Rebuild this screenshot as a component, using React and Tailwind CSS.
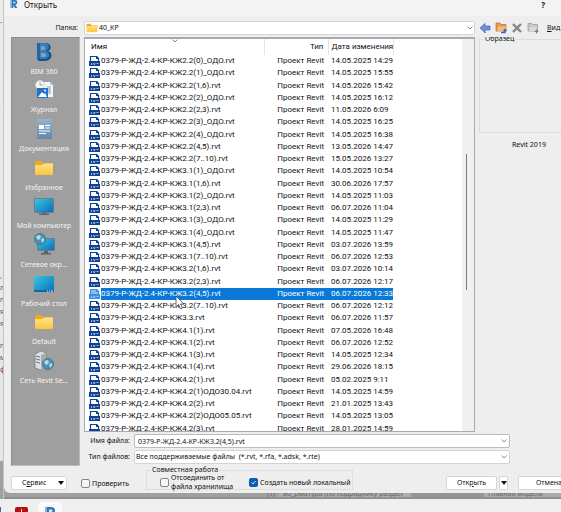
import { useState } from "react";

const files = [
  ["КЖ2.2(0)_ОДО", "14.05.2025 14:29"],
  ["КЖ2.2(1)_ОДО", "14.05.2025 15:55"],
  ["КЖ2.2(1,6)", "14.05.2026 15:42"],
  ["КЖ2.2(2)_ОДО", "14.05.2025 16:12"],
  ["КЖ2.2(2,3)", "11.05.2026 6:09"],
  ["КЖ2.2(3)_ОДО", "14.05.2025 16:25"],
  ["КЖ2.2(4)_ОДО", "14.05.2025 16:38"],
  ["КЖ2.2(4,5)", "13.05.2026 14:47"],
  ["КЖ2.2(7..10)", "15.05.2026 13:27"],
  ["КЖ3.1(1)_ОДО", "14.05.2025 10:54"],
  ["КЖ3.1(1,6)", "30.06.2026 17:57"],
  ["КЖ3.1(2)_ОДО", "14.05.2025 11:03"],
  ["КЖ3.1(2,3)", "06.07.2026 11:04"],
  ["КЖ3.1(3)_ОДО", "14.05.2025 11:29"],
  ["КЖ3.1(4)_ОДО", "14.05.2025 11:47"],
  ["КЖ3.1(4,5)", "03.07.2026 13:59"],
  ["КЖ3.1(7..10)", "06.07.2026 12:53"],
  ["КЖ3.2(1,6)", "03.07.2026 10:14"],
  ["КЖ3.2(2,3)", "06.07.2026 12:17"],
  ["КЖ3.2(4,5)", "06.07.2026 12:33"],
  ["КЖ3.2(7..10)", "06.07.2026 12:12"],
  ["КЖ3.3", "06.07.2026 11:57"],
  ["КЖ4.1(1)", "07.05.2026 16:48"],
  ["КЖ4.1(2)", "06.07.2026 12:52"],
  ["КЖ4.1(3)", "14.05.2025 12:34"],
  ["КЖ4.1(4)", "29.06.2026 18:15"],
  ["КЖ4.2(1)", "05.02.2025 9:11"],
  ["КЖ4.2(1)ОДО30.04", "14.05.2025 14:59"],
  ["КЖ4.2(2)", "21.01.2025 13:43"],
  ["КЖ4.2(2)ОДО05.05", "14.05.2025 13:05"],
  ["КЖ4.2(3)", "28.01.2025 14:59"],
];

const places = [
  ["BIM 360", BimIcon],
  ["Журнал", HistoryIcon],
  ["Документация", DocumentsIcon],
  ["Избранное", FolderIcon],
  ["Мой компьютер", ComputerIcon],
  ["Сетевое окр...", NetworkIcon],
  ["Рабочий стол", DesktopIcon],
  ["Default", FolderIcon],
  ["Сеть Revit Se...", ServerIcon],
];

function BimIcon() {
  return (
    <svg viewBox="0 0 20 20" className="size-5">
      <path d="M3 1h8c7 0 7 7 3 8 5 1 5 10-3 10H5l-2-2z" fill="#174f86" />
      <path d="M3 1h7c6 0 6 6 2 8 5 2 4 8-2 8H3z" fill="#2f7fc4" />
      <path d="M7 4h2c3 0 3 4 0 4H7zM7 11h3c3 0 3 4 0 4H7z" fill="#9c9c9c" />
      <path d="M3 1h3v16H3z" fill="#1f66a6" />
    </svg>
  );
}

function HistoryIcon() {
  return (
    <svg viewBox="0 0 20 20" className="size-5">
      <path d="M9 2h7l3 3v12H9z" fill="#f4f6f8" />
      <path d="M16 2v3h3z" fill="#b9c3cc" />
      <path d="M13 7h4M13 9h4M13 11h4M13 13h4" stroke="#7f9fbc" />
      <circle cx="6" cy="5" r="4.5" fill="#f6f4ef" stroke="#c9c9c4" strokeWidth=".6" />
      <path d="M6 2v3h3" stroke="#888" strokeWidth=".7" fill="none" />
      <path d="M3 8h11v10H3z" fill="#2074c8" />
      <path d="M4 17l4-5 2 2 1-1 2 4z" fill="#fff" />
      <circle cx="11" cy="10.500" r="1" fill="#fff" />
    </svg>
  );
}

function DocumentsIcon() {
  return (
    <svg viewBox="0 0 20 20" className="size-5">
      <defs>
        <linearGradient id="docs" x2="0" y2="1">
          <stop stopColor="#94b3cf" />
          <stop offset="1" stopColor="#6488ab" />
        </linearGradient>
      </defs>
      <path d="M3 0h15v20H3z" fill="url(#docs)" />
      <path d="M5 6h5v4H5z" fill="#fff" />
      <path d="M11 6.500h5M11 9h5M5 12h11M5 14.500h7" stroke="#fff" strokeWidth="1.200" />
    </svg>
  );
}

function FolderIcon({ className = "size-5" }) {
  return (
    <svg viewBox="0 0 20 20" className={className}>
      <defs>
        <linearGradient id="folder" x2="0" y2="1">
          <stop stopColor="#ffe08a" />
          <stop offset="1" stopColor="#fcc63c" />
        </linearGradient>
      </defs>
      <path d="M1 4q0-1 1-1h5l2 2h9q1 0 1 1v4H1z" fill="#f0a81c" />
      <path d="M1 7h7l2-1.500h9V16q0 1-1 1H2q-1 0-1-1z" fill="url(#folder)" />
    </svg>
  );
}

function ScreenGradient() {
  return (
    <defs>
      <linearGradient id="screen" x2="1" y2="1">
        <stop stopColor="#35c9dc" />
        <stop offset="1" stopColor="#0b6dc0" />
      </linearGradient>
    </defs>
  );
}

function ComputerIcon() {
  return (
    <svg viewBox="0 0 20 20" className="size-5">
      <ScreenGradient />
      <path d="M8 15h4v3H8z" fill="#777f86" />
      <path d="M5 17.500h10v1.500H5z" fill="#59636c" />
      <path d="M.5 2.500h19v14H.5z" fill="#48545e" />
      <path d="M1 3h18v13H1z" fill="url(#screen)" />
    </svg>
  );
}

function Globe({ cx, cy }) {
  return (
    <g>
      <circle cx={cx} cy={cy} r="5.500" fill="#4a8fb5" />
      <path d={`M${cx - 4} ${cy - 3}l4-1 1 2-2 3-2-1zM${cx + 1} ${cy}l3-1 0 3-2 2z`} fill="#b4dcd4" />
      <circle cx={cx} cy={cy} r="5.500" fill="none" stroke="#316c94" strokeWidth=".7" />
    </g>
  );
}

function NetworkIcon() {
  return (
    <svg viewBox="0 0 22 22" className="size-[22px]">
      <path d="M11 18h4v2h-4zM8 20h10v1.500H8z" fill="#59636c" />
      <path d="M4.500 5.500h17v12h-17z" fill="#48545e" />
      <path d="M5 6h16v11H5z" fill="url(#screen)" />
      <Globe cx={7} cy={6} />
    </svg>
  );
}

function DesktopIcon() {
  return (
    <svg viewBox="0 0 22 20" className="h-5 w-[22px]">
      <path d="M1 2h20v16H1z" fill="url(#screen)" />
      <path d="M1 16h20v2H1z" fill="#1766a0" />
      <path d="M14 17h1M16 17h1M18 17h2" stroke="#e9f6ff" />
    </svg>
  );
}

function ServerIcon() {
  return (
    <svg viewBox="0 0 20 20" className="size-5">
      <path d="M1 3l6-3 5 2v14l-5 3-6-2z" fill="#dcdfe1" stroke="#6f7478" strokeWidth=".7" />
      <path d="M7 4l5-2v14l-5 3z" fill="#a6abaf" />
      <path d="M2 5l4 1M2 8l4 1M2 11l4 1" stroke="#6f7478" />
      <Globe cx={14} cy={13} />
    </svg>
  );
}

function RvtIcon({ selected }) {
  const blue = selected ? "#3f8fdc" : "#0f4295";
  return (
    <svg viewBox="0 0 11 12" className="block h-3 w-[11px]">
      <path d="M1.500 1.500h6l2 2v7h-8z" fill={selected ? "#86bdf0" : "#fff"} stroke={blue} strokeWidth="1.200" />
      <path d="M7 1h1l2.500 3H7z" fill={blue} />
      <path d="M0 6h11v5H0z" fill={blue} />
      <path d="M2.500 10V8M4.500 8l.8 2 .8-2M7.500 8.500h2" fill="none" stroke="#c5d6ee" strokeWidth=".8" />
    </svg>
  );
}

function RevitIcon({ className }) {
  return (
    <svg viewBox="0 0 12 12" className={className}>
      <path d="M1 0h6q4 0 4 3.500T8 7l3 5H7.500L5 7.500V12H1z" fill="#2f76bd" />
      <path d="M1 0h2v12H1z" fill="#7db4e0" />
      <path d="M5 2.500h2q1.500 0 1.500 1T7 5H5z" fill="#dcebf7" />
    </svg>
  );
}

function Chevron({ className }) {
  return (
    <svg viewBox="0 0 8 8" className={className}>
      <path d="M1.500 2.500L4 5l2.500-2.500" fill="none" stroke="#888" />
    </svg>
  );
}

function Arrow() {
  return (
    <svg viewBox="0 0 6 4" className="h-1 w-1.5">
      <path d="M0 0h6L3 4z" fill="#111" />
    </svg>
  );
}

function ToolButtons() {
  return (
    <>
      <button aria-label="Назад">
        <svg viewBox="0 0 12 12" className="size-3">
          <path d="M1 6l5-4.500V4h5v4H6v2.500z" fill="#6f8fe0" stroke="#4660b8" strokeWidth=".7" />
          <path d="M5 10.500h2" stroke="#e048d8" />
        </svg>
      </button>
      <button aria-label="Вверх">
        <svg viewBox="0 0 12 12" className="size-3">
          <path d="M1 1h4l1 1.500h5V9H1z" fill="#e59a4a" stroke="#b5702c" strokeWidth=".7" />
          <path d="M2 9l1.500-4.500H11L9.500 9z" fill="#f6bd78" />
          <path d="M6 10.500h4V8M8.500 9L10 7.500 11.500 9" fill="none" stroke="#3d62cc" strokeWidth="1.300" />
        </svg>
      </button>
      <button aria-label="Удалить">
        <svg viewBox="0 0 12 12" className="size-3">
          <path d="M2 2l8 8M10 2l-8 8" stroke="#858585" strokeWidth="2.400" />
        </svg>
      </button>
      <button aria-label="Создать папку">
        <svg viewBox="0 0 12 12" className="size-3">
          <path d="M1 1.500h4l1 1h4.500V9H1z" fill="#c8c8c8" stroke="#9a9a9a" strokeWidth=".8" />
          <path d="M2 9l1.500-4H10v4z" fill="#dadada" />
          <path d="M9.500 7.500v4M7.500 9.500h4" stroke="#7a7a7a" strokeWidth="1.200" />
        </svg>
      </button>
    </>
  );
}

function Check({ label, defaultChecked, id }) {
  return (
    <div className="flex items-center gap-0.5">
      <span className="relative size-[9px] shrink-0">
        <input
          id={id}
          type="checkbox"
          defaultChecked={defaultChecked}
          className="block size-[9px] appearance-none rounded-[2px] border border-[#858585] bg-[#f6f6f6] checked:border-[#0a5fb5] checked:bg-[#0a5fb5]"
        />
        {defaultChecked && (
          <svg viewBox="0 0 9 9" className="pointer-events-none absolute inset-0 size-[9px]">
            <path d="M2.500 4.500L4 6l2.500-3" fill="none" stroke="#cfe4f8" />
          </svg>
        )}
      </span>
      <label htmlFor={id} className="whitespace-pre leading-[9px]">{label}</label>
    </div>
  );
}

export default function App() {
  const [selected, setSelected] = useState(19);
  const [name, setName] = useState("0379-Р-ЖД-2.4-КР-КЖ3.2(4,5).rvt");

  return (
    <main className="flex h-screen flex-col overflow-hidden bg-[#efefef] font-['Noto_Sans',sans-serif] text-[7px] leading-3 text-[#111]">
      <div className="flex min-h-0 flex-1 bg-[linear-gradient(#ebebeb_0,#e6e6e6_460px,#a0a0a0_462px)]">

        <div className="flex w-1 shrink-0 flex-col overflow-hidden border-r border-[#c4c4c4] pt-4 text-[#6b4a3c]">
          <span>-</span>
          <div className="mt-[242px]">
            <p>,</p>
            <p>л</p>
            <p>п</p>
            <p>я</p>
            <p>я</p>
          </div>
          <div className="mt-2.5">
            <p>п</p>
            <p>м</p>
            <p>ф</p>
          </div>
        </div>

        <div className="flex min-w-0 flex-1 flex-col">
          <section className="flex min-h-0 flex-1 flex-col overflow-hidden rounded-bl-md bg-[#eeeeee]">

            <header className="flex h-4 shrink-0 items-start gap-1.5 bg-[#f3f3f3] pl-1.5">
              <RevitIcon className="size-2" />
              <h1 className="text-[8px] leading-[9px]">Открыть</h1>
              <button aria-label="Справка" className="mr-4 ml-auto text-[8px] font-bold leading-[9px]">?</button>
            </header>

            <div className="flex h-[21px] shrink-0 items-start pt-[5px]">
              <label htmlFor="folder-select" className="w-20 shrink-0 pr-1.5 text-right leading-[14px]">Папка:</label>
              <div className="relative min-w-0 flex-1">
                <select
                  id="folder-select"
                  className="block h-[14px] w-full appearance-none rounded-[2px] border border-[#d4d4d4] bg-white pl-3.5 leading-3"
                >
                  <option>40_КР</option>
                </select>
                <FolderIcon className="pointer-events-none absolute top-px left-0.5 size-3" />
                <Chevron className="pointer-events-none absolute top-[3px] right-px size-2" />
              </div>
              <div className="flex w-[86px] shrink-0 items-center gap-1 overflow-hidden pt-px pl-1">
                <ToolButtons />
                <button className="pl-1"><u>В</u>ид</button>
              </div>
            </div>

            <div className="flex min-h-0 flex-1 pl-[7px]">
              <nav className="h-[429px] w-[69px] shrink-0 border border-[#b8bcc4] border-t-[#8c8c8c] border-l-[#8c8c8c] bg-[#9f9f9f] text-[#f4f4f4]">
                <div className="grid h-[348px] w-16 grid-rows-9">
                  {places.map(([label, Icon]) => (
                    <button key={label} className="flex flex-col items-center justify-end gap-1">
                      <Icon />
                      <span className="h-[11px] leading-[11px]">{label}</span>
                    </button>
                  ))}
                </div>
              </nav>

              <div className="ml-1 flex min-w-0 flex-1 flex-col">
                <div className="flex h-[395px] shrink-0">
                  <div className="flex min-w-0 flex-1 overflow-hidden border border-t-2 border-[#a6a9b4] bg-white">
                    <div className="relative min-w-0 flex-1 overflow-hidden pl-1">
                      <Chevron className="absolute -top-0.5 left-[86px] size-2" />
                      <table className="h-[396px] w-[304px] table-fixed border-collapse font-['Roboto','Noto_Sans',sans-serif] text-[8px]">
                        <colgroup>
                          <col className="w-3" />
                          <col className="w-[163px]" />
                          <col className="w-16" />
                          <col className="w-[65px]" />
                        </colgroup>
                        <thead>
                          <tr className="h-4 text-left">
                            <th colSpan={2} className="border-r border-[#e4e4e4] p-0 pl-0.5 font-normal">Имя</th>
                            <th className="border-r border-[#e4e4e4] p-0 pr-1 text-right font-normal">Тип</th>
                            <th className="border-r border-[#e4e4e4] p-0 pl-[3px] font-normal whitespace-nowrap">Дата изменения</th>
                          </tr>
                        </thead>
                        <tbody>
                          {files.map(([file, date], i) => (
                            <tr key={file} onClick={() => setSelected(i)}>
                              <td className="p-0">
                                <RvtIcon selected={i === selected} />
                              </td>
                              <td className={i === selected ? "bg-[#0a78d7] p-0 whitespace-nowrap text-white" : "p-0 whitespace-nowrap"}>
                                0379-Р-ЖД-2.4-КР-{file}.rvt
                              </td>
                              <td className={i === selected ? "bg-[#0a78d7] p-0 pr-1 text-right whitespace-nowrap text-white" : "p-0 pr-1 text-right whitespace-nowrap"}>
                                Проект Revit
                              </td>
                              <td className={i === selected ? "bg-[#0a78d7] p-0 pl-[3px] whitespace-nowrap text-white" : "p-0 pl-[3px] whitespace-nowrap"}>
                                {date}
                              </td>
                            </tr>
                          ))}
                        </tbody>
                      </table>
                      <svg viewBox="0 0 10 15" className="pointer-events-none absolute top-[256px] left-[90px] h-[15px] w-2.5">
                        <path d="M1 1v11l2.500-2.500L5.500 14l2-1-2-4H9z" fill="#fff" stroke="#444" strokeWidth=".8" />
                      </svg>
                    </div>
                    <div className="w-3 shrink-0 bg-[#f0f0f0] pt-[115px]">
                      <div className="ml-1 h-[136px] w-px bg-[#7c7c7c]" />
                    </div>
                  </div>

                  <div className="w-[86px] shrink-0 overflow-hidden pl-1">
                    <fieldset className="h-24 border border-r-0 border-[#dcdcdc]">
                      <legend className="ml-1 px-px leading-[4px]">Образец</legend>
                    </fieldset>
                    <p className="mt-1.5 pl-[33px] whitespace-nowrap">Revit 2019</p>
                  </div>
                </div>

                <div className="mt-0.5 flex flex-col gap-0.5 pr-[51px]">
                  <div className="flex items-center">
                    <label htmlFor="file-name" className="w-[50px] shrink-0 pr-1 text-right whitespace-nowrap">Имя файла:</label>
                    <div className="relative min-w-0 flex-1">
                      <input
                        id="file-name"
                        value={name}
                        onChange={(e) => setName(e.target.value)}
                        className="block h-[14px] w-full rounded-[2px] border border-[#bcbcbc] bg-white pl-[3px] leading-3"
                      />
                      <Chevron className="pointer-events-none absolute top-[3px] right-0.5 size-2" />
                    </div>
                  </div>
                  <div className="flex items-center">
                    <label htmlFor="file-type" className="w-[50px] shrink-0 pr-1 text-right whitespace-nowrap">Тип файлов:</label>
                    <div className="relative min-w-0 flex-1">
                      <select
                        id="file-type"
                        className="block h-[14px] w-full appearance-none rounded-[2px] border border-[#d4d4d4] bg-white pl-px leading-3"
                      >
                        <option>Все поддерживаемые файлы&nbsp; (*.rvt, *.rfa, *.adsk, *.rte)</option>
                      </select>
                      <Chevron className="pointer-events-none absolute top-[3px] right-0.5 size-2" />
                    </div>
                  </div>
                </div>
              </div>
            </div>

            <footer className="flex h-[27px] shrink-0 items-end pb-[3px] pl-[7px] whitespace-nowrap">
              <button className="flex h-[14px] w-14 items-center justify-between rounded-[2px] border border-[#d6d6d6] bg-white pr-0.5 pl-2.5">
                <span>С<u>е</u>рвис</span>
                <Arrow />
              </button>
              <div className="ml-3.5 w-[65px] shrink-0 pb-0.5">
                <Check id="preview" label="Проверить" />
              </div>
              <fieldset className="h-[23px] w-[207px] shrink-0 border border-[#dedede]">
                <legend className="ml-1 px-px leading-[6px]">Совместная работа</legend>
                <div className="flex h-[18px] items-center pl-[13px]">
                  <div className="w-[89px] shrink-0">
                    <Check id="detach" label={"Отсоединить от\nфайла хранилища"} />
                  </div>
                  <Check id="local" label="Создать новый локальный" defaultChecked />
                </div>
              </fieldset>
              <button className="ml-auto h-[14px] w-[51px] shrink-0 rounded-[2px] border border-[#d6d6d6] bg-white">
                Отк<u>р</u>ыть
              </button>
              <button aria-label="Варианты открытия" className="ml-0.5 flex h-[14px] w-[9px] shrink-0 items-center justify-center rounded-[2px] border border-[#d6d6d6] bg-white">
                <Arrow />
              </button>
              <button className="ml-2.5 h-[14px] w-[43px] shrink-0 overflow-hidden rounded-l-[2px] border border-r-0 border-[#d6d6d6] bg-white pl-[17px] text-left">
                Отмена
              </button>
            </footer>
          </section>

          <div className="flex h-1.5 shrink-0 justify-end overflow-hidden border-b-2 border-[#8f8f8f] leading-[2px] whitespace-nowrap text-[#666]">
            <span className="w-[12px]">(1)</span>
            <span className="w-[132px] overflow-hidden bg-[#acacac] pl-1">во_рматура (по подрядчику раздел</span>
            <span className="w-[73px] bg-[#949494]" />
            <span className="w-[77px] overflow-hidden bg-[#acacac] pl-1">Главная модель</span>
          </div>
        </div>
      </div>

      <div className="flex h-[13px] shrink-0 items-start overflow-hidden">
        <span className="mt-2 h-2 w-px bg-[#4468b0]" />
        <span className="mt-2 ml-3.5 flex h-3 w-[13px] justify-center rounded-[2px] bg-[#b80f0f]">
          <span className="mt-0.5 h-2 w-px bg-[#f8d0d0]" />
        </span>
        <span className="mt-[3px] ml-2.5 flex h-4 w-6 justify-center rounded-sm bg-[#f9fafb] pt-[5px]">
          <RevitIcon className="size-3" />
        </span>
      </div>
    </main>
  );
}
